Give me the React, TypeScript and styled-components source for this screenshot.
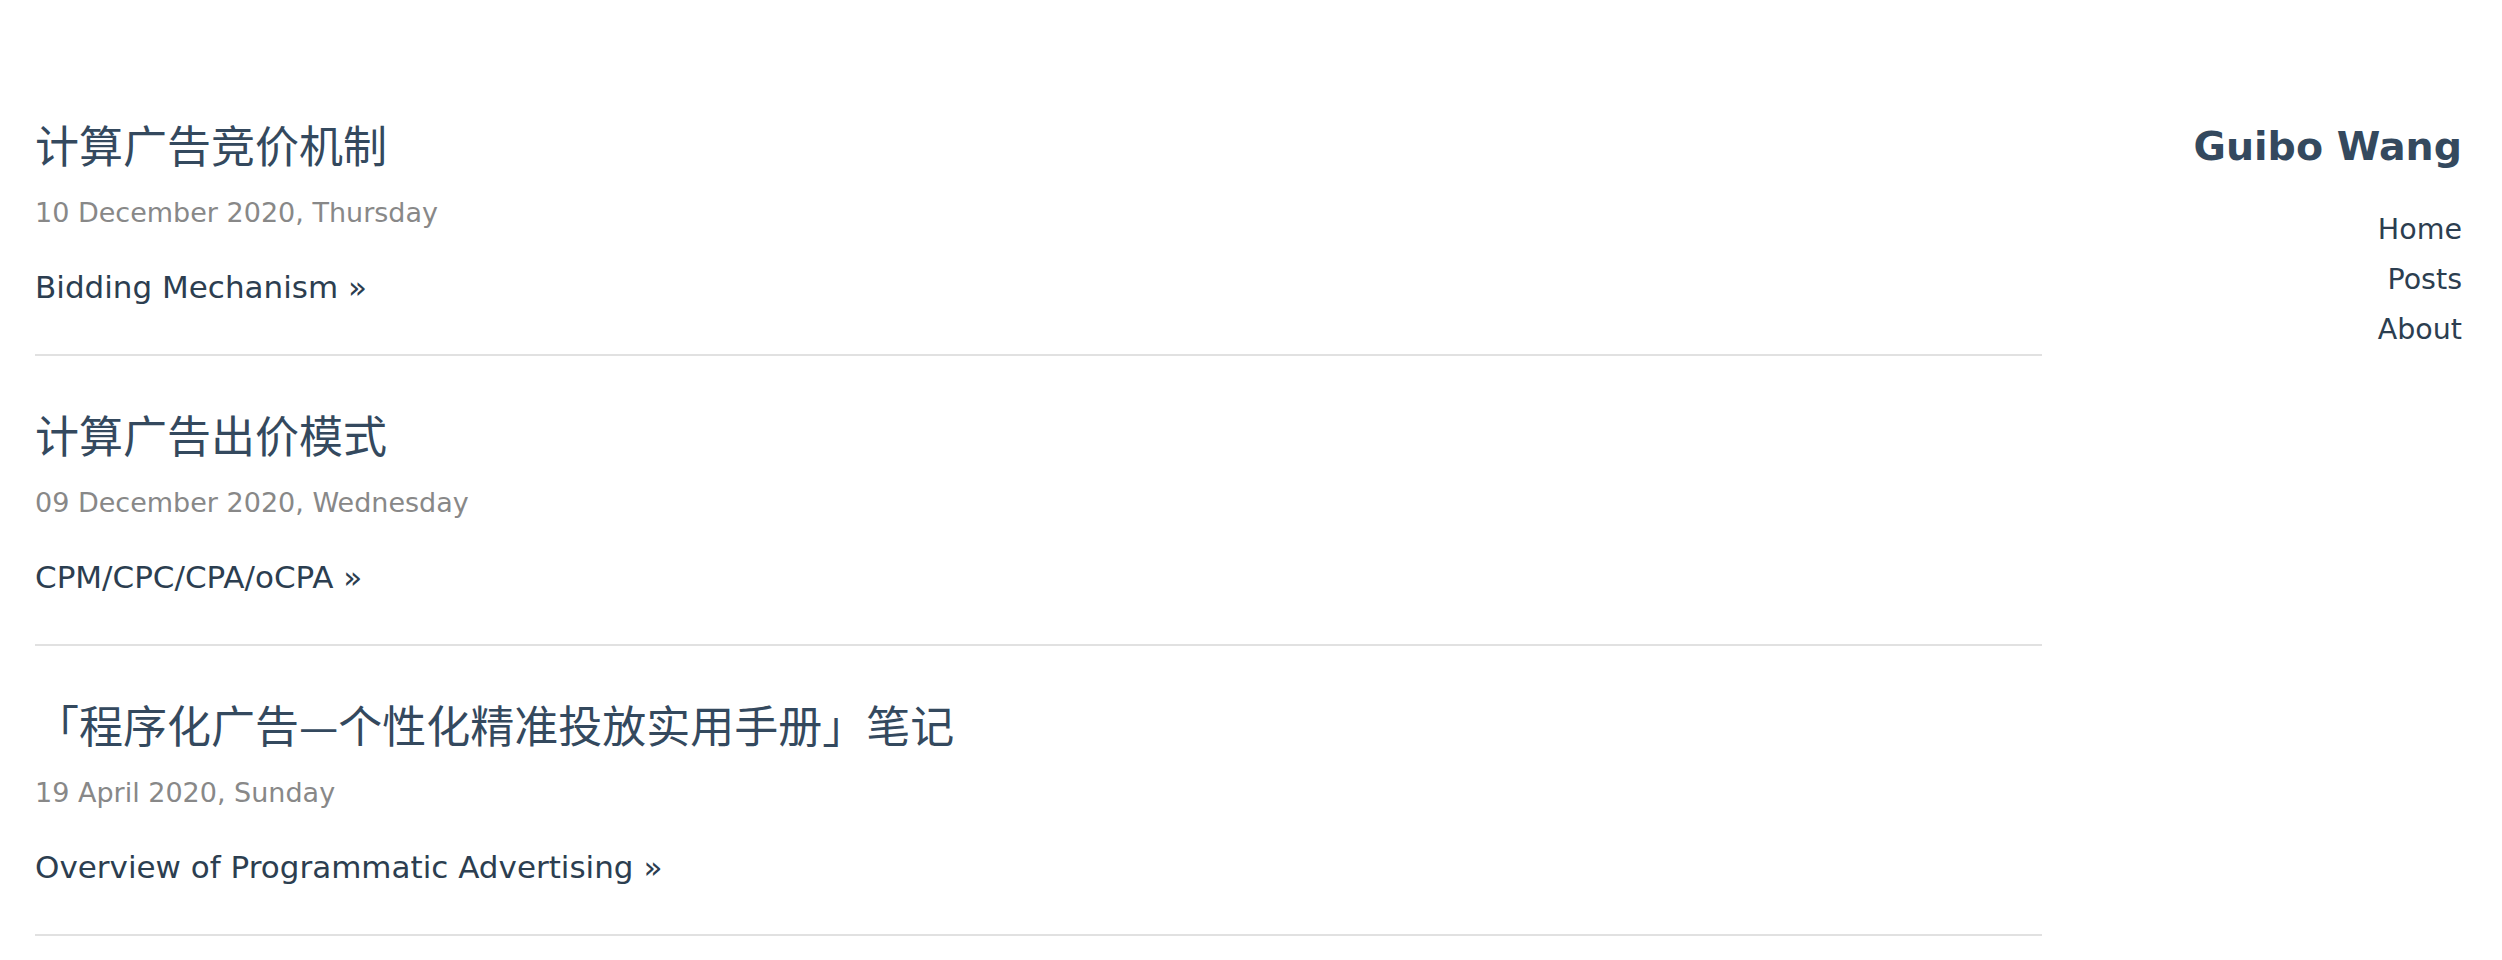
import React from "react";
import styled, { createGlobalStyle } from "styled-components";

const GlobalStyle = createGlobalStyle`
  html, body {
    margin: 0;
    padding: 0;
    background: #ffffff;
  }
  body {
    font-family: "DejaVu Sans", "Noto Sans CJK SC", sans-serif;
    color: #34495e;
  }
  a {
    color: inherit;
    text-decoration: none;
  }
`;

const Page = styled.div`
  display: flex;
  align-items: flex-start;
  padding: 18px 40px 0 35px;
  box-sizing: border-box;
  width: 100%;
`;

const Main = styled.main`
  width: 2007px;
  flex: none;
  padding-top: 48px;
`;

const Entry = styled.article`
  padding: 48px 0 45px;
  border-bottom: 2px solid #e1e1e1;
`;

const Title = styled.h2`
  margin: 0;
  font-family: "Noto Sans CJK SC", "DejaVu Sans", sans-serif;
  font-weight: 400;
  font-size: 44px;
  line-height: 60px;
  color: #34495e;
`;

const DateLine = styled.div`
  margin-top: 19px;
  font-size: 27px;
  line-height: 40px;
  color: #888888;
`;

const ReadMore = styled.a`
  display: block;
  margin-top: 32px;
  font-size: 31px;
  line-height: 44px;
  color: #2c3e50;
`;

const Sidebar = styled.aside`
  flex: 1;
  text-align: right;
  padding-top: 103px;
`;

const SiteName = styled.div`
  font-weight: 700;
  font-size: 39.5px;
  line-height: 50px;
  color: #34495e;
`;

const Nav = styled.nav`
  display: flex;
  flex-direction: column;
  align-items: flex-end;
  margin-top: 34px;
`;

const NavLink = styled.a`
  font-size: 28.5px;
  line-height: 50px;
  color: #2c3e50;
`;

const posts = [
  {
    title: "计算广告竞价机制",
    date: "10 December 2020, Thursday",
    summary: "Bidding Mechanism »",
  },
  {
    title: "计算广告出价模式",
    date: "09 December 2020, Wednesday",
    summary: "CPM/CPC/CPA/oCPA »",
  },
  {
    title: "「程序化广告—个性化精准投放实用手册」笔记",
    date: "19 April 2020, Sunday",
    summary: "Overview of Programmatic Advertising »",
  },
];

export default function App() {
  return (
    <>
      <GlobalStyle />
      <Page>
        <Main>
          {posts.map((p) => (
            <Entry key={p.title}>
              <Title>{p.title}</Title>
              <DateLine>{p.date}</DateLine>
              <ReadMore href="#">{p.summary}</ReadMore>
            </Entry>
          ))}
        </Main>
        <Sidebar>
          <SiteName>Guibo Wang</SiteName>
          <Nav>
            <NavLink href="#">Home</NavLink>
            <NavLink href="#">Posts</NavLink>
            <NavLink href="#">About</NavLink>
          </Nav>
        </Sidebar>
      </Page>
    </>
  );
}
